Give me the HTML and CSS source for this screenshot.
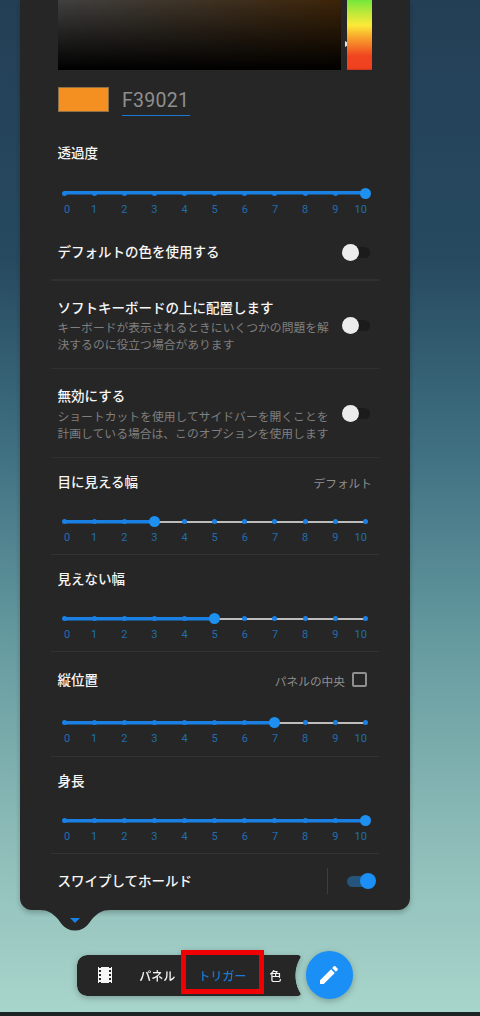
FILE: index.html
```html
<!DOCTYPE html>
<html lang="ja">
<head>
<meta charset="utf-8">
<title>トリガー</title>
<link rel="stylesheet" href="styles.css">
</head>
<body>
<main class="panel">
  <div class="picker">
    <div class="sv"></div>
    <div class="caret"></div>
    <div class="hue"></div>
  </div>
  <div class="color-row">
    <div class="swatch"></div>
    <div class="hex">F39021</div>
  </div>

  <section class="block opacity">
    <div class="title">透過度</div>
    <div class="slider slider-first" style="--v:100%">
      <div class="track"><i class="tick"></i><i class="tick"></i><i class="tick"></i><i class="tick"></i><i class="tick"></i><i class="tick"></i><i class="tick"></i><i class="tick"></i><i class="tick"></i><i class="tick"></i><i class="tick thumb"></i></div>
      <div class="labels"><span>0</span><span>1</span><span>2</span><span>3</span><span>4</span><span>5</span><span>6</span><span>7</span><span>8</span><span>9</span><span>10</span></div>
    </div>
  </section>

  <section class="row row-single">
    <div class="text"><div class="title">デフォルトの色を使用する</div></div>
    <div class="toggle"></div>
  </section>

  <section class="row row-double">
    <div class="text">
      <div class="title">ソフトキーボードの上に配置します</div>
      <div class="desc">キーボードが表示されるときにいくつかの問題を解決するのに役立つ場合があります</div>
    </div>
    <div class="toggle"></div>
  </section>

  <section class="row row-double">
    <div class="text">
      <div class="title">無効にする</div>
      <div class="desc">ショートカットを使用してサイドバーを開くことを計画している場合は、このオプションを使用します</div>
    </div>
    <div class="toggle"></div>
  </section>

  <section class="block sep">
    <div class="head"><div class="title">目に見える幅</div><div class="aside">デフォルト</div></div>
    <div class="slider" style="--v:30%">
      <div class="track"><i class="tick"></i><i class="tick"></i><i class="tick"></i><i class="tick thumb"></i><i class="tick"></i><i class="tick"></i><i class="tick"></i><i class="tick"></i><i class="tick"></i><i class="tick"></i><i class="tick"></i></div>
      <div class="labels"><span>0</span><span>1</span><span>2</span><span>3</span><span>4</span><span>5</span><span>6</span><span>7</span><span>8</span><span>9</span><span>10</span></div>
    </div>
  </section>

  <section class="block sep">
    <div class="head"><div class="title">見えない幅</div></div>
    <div class="slider" style="--v:50%">
      <div class="track"><i class="tick"></i><i class="tick"></i><i class="tick"></i><i class="tick"></i><i class="tick"></i><i class="tick thumb"></i><i class="tick"></i><i class="tick"></i><i class="tick"></i><i class="tick"></i><i class="tick"></i></div>
      <div class="labels"><span>0</span><span>1</span><span>2</span><span>3</span><span>4</span><span>5</span><span>6</span><span>7</span><span>8</span><span>9</span><span>10</span></div>
    </div>
  </section>

  <section class="block sep block-tall">
    <div class="head"><div class="title">縦位置</div><div class="aside aside-check">パネルの中央<span class="check"></span></div></div>
    <div class="slider" style="--v:70%">
      <div class="track"><i class="tick"></i><i class="tick"></i><i class="tick"></i><i class="tick"></i><i class="tick"></i><i class="tick"></i><i class="tick"></i><i class="tick thumb"></i><i class="tick"></i><i class="tick"></i><i class="tick"></i></div>
      <div class="labels"><span>0</span><span>1</span><span>2</span><span>3</span><span>4</span><span>5</span><span>6</span><span>7</span><span>8</span><span>9</span><span>10</span></div>
    </div>
  </section>

  <section class="block sep">
    <div class="head"><div class="title">身長</div></div>
    <div class="slider" style="--v:100%">
      <div class="track"><i class="tick"></i><i class="tick"></i><i class="tick"></i><i class="tick"></i><i class="tick"></i><i class="tick"></i><i class="tick"></i><i class="tick"></i><i class="tick"></i><i class="tick"></i><i class="tick thumb"></i></div>
      <div class="labels"><span>0</span><span>1</span><span>2</span><span>3</span><span>4</span><span>5</span><span>6</span><span>7</span><span>8</span><span>9</span><span>10</span></div>
    </div>
  </section>

  <section class="last-row">
    <div class="title">スワイプしてホールド</div>
    <div class="vline"></div>
    <div class="toggle toggle-on"></div>
  </section>
</main>

<svg class="tail" width="70" height="21" viewBox="0 0 70 21" aria-hidden="true">
  <path class="tail-body" d="M0 0H70C62 0 58 3 53 8C49 12 46.500 20.500 35 20.500C23.500 20.500 21 12 17 8C12 3 8 0 0 0Z"/>
  <path class="tail-arrow" d="M30 8H40L35 13Z"/>
</svg>

<nav class="dock">
  <div class="bar">
    <div class="tab tab-film">
      <svg class="film" width="24" height="24" viewBox="0 0 24 24" aria-hidden="true"><path d="M18 4v1h-2V4H8v1H6V4H5v16h1v-1h2v1h8v-1h2v1h1V4h-1zM8 17H6v-2h2v2zm0-4H6v-2h2v2zm0-4H6V7h2v2zm10 8h-2v-2h2v2zm0-4h-2v-2h2v2zm0-4h-2V7h2v2z"/></svg>
    </div>
    <div class="tab tab-panel">パネル</div>
    <div class="tab tab-trigger">トリガー</div>
    <div class="tab tab-color">色</div>
  </div>
  <div class="highlight"></div>
  <button class="fab" type="button" aria-label="編集">
    <svg width="24" height="24" viewBox="0 0 24 24" aria-hidden="true"><path d="M3 17.250V21h3.750L17.810 9.940l-3.750-3.750L3 17.250zM20.710 7.040c.390-.390.390-1.020 0-1.410l-2.340-2.340c-.390-.390-1.020-.390-1.410 0l-1.830 1.830 3.750 3.750 1.830-1.830z"/></svg>
  </button>
</nav>

<div class="strip"></div>
</body>
</html>
```
FILE: styles.css
```css
* { box-sizing: border-box; }
html, body { margin: 0; height: 1016px; overflow: hidden; }
body {
  display: flex;
  flex-direction: column;
  font-family: "Noto Sans CJK JP", "Noto Sans", sans-serif;
  background: linear-gradient(to bottom, #233f56 0, #274a60 260px, #3f7082 450px, #659a9f 640px, #8dbcb8 840px, #a8d5cb 1012px);
}

.panel {
  flex: none;
  width: 389.500px;
  height: 910px;
  margin-left: 20px;
  padding: 0 31px;
  background: #262626;
  border-radius: 0 0 12px 12px;
  box-shadow: 0 3px 5px rgba(0, 0, 0, .22);
  color: #f2f2f2;
}

/* colour picker */
.picker { display: flex; height: 70px; margin: 0 6.500px; }
.sv {
  width: 284px;
  background: linear-gradient(to top, #000 0, rgba(0, 0, 0, .75) 100%), linear-gradient(to right, #fff, #f39021);
}
.caret {
  width: 0; height: 0;
  margin: 41px -2.500px 0 4px;
  border-left: 5px solid #e4e4e4;
  border-top: 3.500px solid transparent;
  border-bottom: 3.500px solid transparent;
}
.hue {
  width: 25px;
  background: linear-gradient(to top, #c8351c 0, #f0411f 2px, #f0451f 20%, #f9a92e 48%, #fcea38 64%, #b2e83a 85%, #74e83a 100%);
}
.color-row { display: flex; margin: 17px 6.500px 0; height: 29px; }
.swatch { width: 51px; height: 25px; background: #f39021; border: 1px solid #8d6f48; }
.hex {
  width: 68px;
  height: 29px;
  margin-left: 13.500px;
  border-bottom: 1px solid #1e78d2;
  font: 400 19.500px/28px Roboto, sans-serif;
  color: #8f8f8f;
  letter-spacing: .3px;
}

/* text */
.title { height: 20px; padding-bottom: 4px; font-size: 13.500px; line-height: 16px; font-weight: 500; color: #f6f6f6; white-space: nowrap; }
.desc { font-size: 11.800px; line-height: 17px; margin-top: -.5px; color: #7f7f7f; }
.aside { font-size: 11.700px; line-height: 20px; color: #8f8f8f; }
.aside-check { display: flex; align-items: center; gap: 7px; }
.check { width: 15px; height: 15px; margin: -2px 5px 0 0; border: 2px solid #8f8f8f; border-radius: 2px; }

/* blocks */
.block { padding: 15px 6.500px 8.500px; border-bottom: 1px solid #333; }
.opacity { padding: 28px 6.500px 0; border-bottom: 0; }
.block-tall { padding-top: 19px; padding-bottom: 9.500px; }
.head { display: flex; justify-content: space-between; align-items: center; height: 20px; }

/* slider */
.slider { margin: 23px 0 0; padding: 0 6.500px; }
.block-tall .slider { margin-top: 26px; }
.track {
  display: flex;
  justify-content: space-between;
  align-items: center;
  height: 12px;
  background:
    linear-gradient(#1a80e4, #1a80e4) left center / var(--v) 3.500px no-repeat,
    linear-gradient(#bdbdbd, #bdbdbd) center / 100% 2px no-repeat;
}
.tick { display: flex; justify-content: center; width: 0; }
.tick::before { content: ""; flex: none; width: 5px; height: 5px; border-radius: 50%; background: #1a80e4; }
.thumb::before { width: 11px; height: 11px; background: #1e90f0; }
.labels {
  display: flex;
  justify-content: space-between;
  height: 14px;
  margin-top: 3.500px;
  font: 400 11px/14px Roboto, sans-serif;
  color: #206ead;
}
.labels span { display: flex; justify-content: center; width: 0; }
.labels span:first-child { justify-content: flex-start; }
.labels span:last-child { justify-content: flex-end; transform: translateX(1.500px); }

/* rows */
.row {
  display: flex;
  justify-content: space-between;
  align-items: center;
  padding: 18px 0 16px 6.500px;
  border-bottom: 1px solid #303030;
}
.row-single { padding-top: 26px; padding-bottom: 16px; border-bottom: 2px solid #303030; }
.text { width: 279px; }
.toggle {
  flex: none;
  display: flex;
  align-items: center;
  width: 25.500px;
  height: 11px;
  margin-right: 8.500px;
  border-radius: 6px;
  background: #1b1b1b;
}
.toggle::before {
  content: "";
  flex: none;
  width: 17px; height: 17px;
  margin-left: -3px;
  border-radius: 50%;
  background: #ececec;
}
.last-row { display: flex; align-items: center; height: 55px; padding-left: 6.500px; }
.last-row .title { flex: 1; height: 20px; padding-bottom: 2px; line-height: 18px; }
.vline { width: 1px; height: 26px; background: #3d3d3d; }
.toggle-on {
  justify-content: flex-end;
  width: 28px;
  height: 11px;
  margin: 0 4px 0 19px;
  background: #25557a;
}
.toggle-on::before { width: 16px; height: 16px; margin: 0 -1px 0 0; background: #1a8ff5; }

/* pointer below the panel */
.tail { flex: none; margin-left: 40px; display: block; }
.tail-body { fill: #262626; }
.tail-arrow { fill: #1a80e4; }

/* bottom dock */
.dock {
  position: relative;
  flex: none;
  display: flex;
  align-items: center;
  gap: 5px;
  height: 48px;
  margin: 20px 0 0 76.500px;
  filter: drop-shadow(0 2px 3px rgba(0, 0, 0, .25));
}
.bar {
  display: flex;
  align-items: center;
  width: 224px;
  height: 41px;
  border-radius: 10px 3px 3px 10px;
  background: #262626;
  color: #f4f4f4;
  font-size: 12px;
  font-weight: 500;
  -webkit-mask: radial-gradient(circle 34.500px at calc(100% + 28.500px) 50%, transparent 98%, #000 100%);
  mask: radial-gradient(circle 34.500px at calc(100% + 28.500px) 50%, transparent 98%, #000 100%);
}
.tab { display: flex; justify-content: center; align-items: center; height: 100%; white-space: nowrap; }
.tab-film { width: 57px; }
.tab-panel { width: 47.500px; }
.tab-trigger { width: 82.500px; color: #1a78d8; }
.tab-color { width: 24px; }
.film { fill: #f6f6f6; }
.highlight {
  position: absolute;
  left: 104.500px;
  top: -1px;
  width: 83px;
  height: 43.500px;
  border: 5px solid #f00000;
}
.fab {
  flex: none;
  display: flex;
  align-items: center;
  justify-content: center;
  width: 47.500px;
  height: 47.500px;
  padding: 0;
  border: 0;
  border-radius: 50%;
  background: #1a8ff5;
}
.fab svg { fill: #fff; }

.strip { flex: 1; margin-top: 13px; background: #1e2326; }
```
